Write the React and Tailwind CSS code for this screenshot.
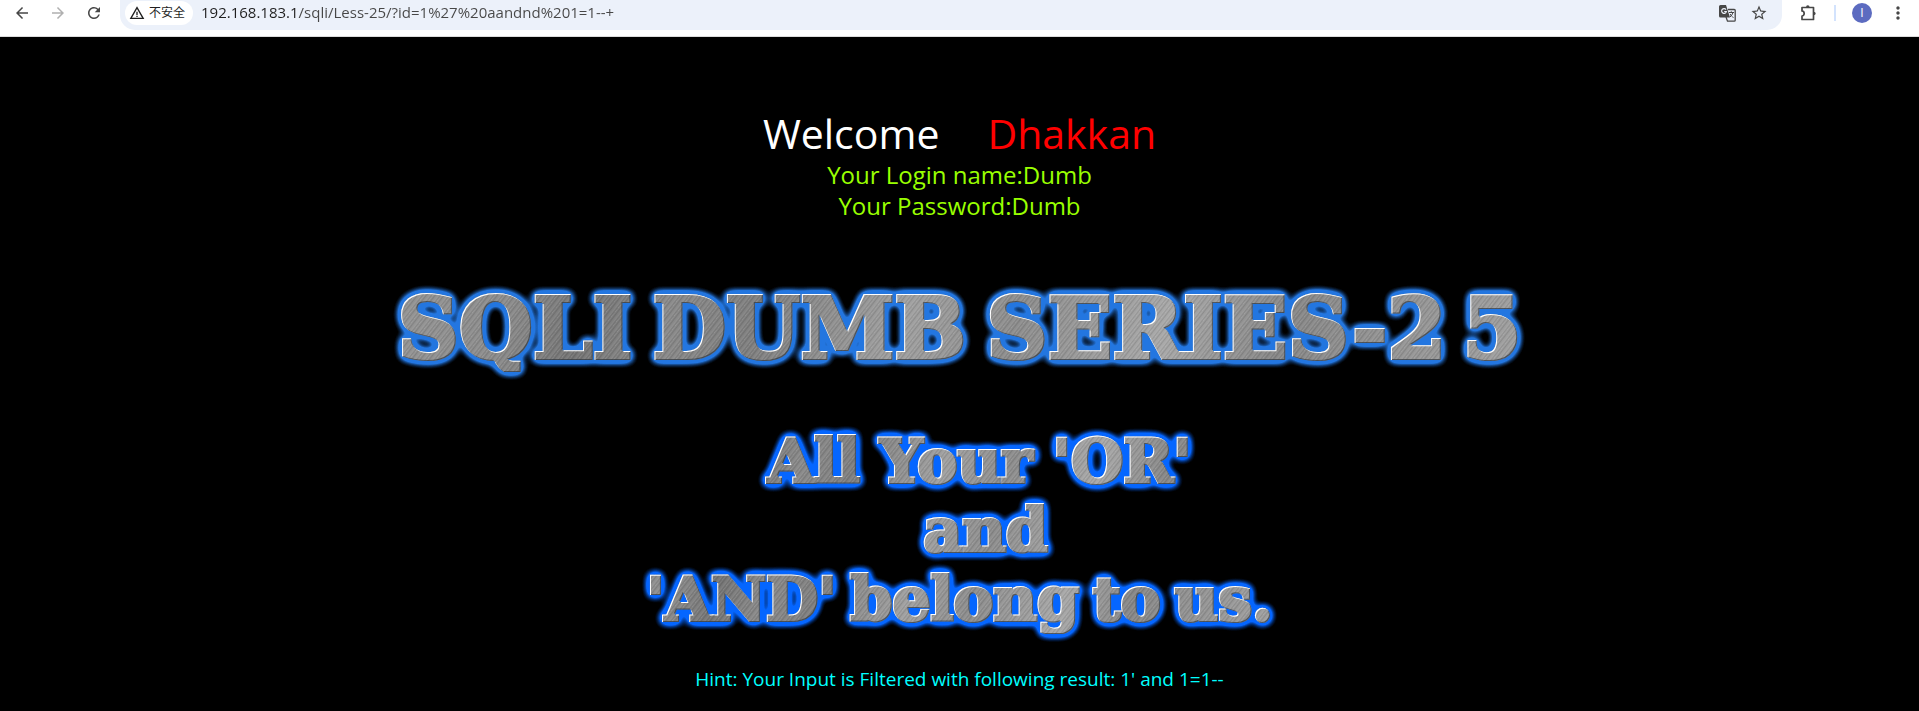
import {
  MdArrowBack, MdArrowForward, MdRefresh, MdWarningAmber,
  MdStarBorder, MdMoreVert,
} from "react-icons/md";

const steel =
  "bg-clip-text text-transparent [-webkit-text-stroke:4px_transparent] bg-[repeating-linear-gradient(128deg,#ffffff1c_0px,#ffffff00_1px,#0000001c_2px,#ffffff00_3px,#ffffff14_5px,#00000012_6px,#ffffff00_7px),linear-gradient(105deg,#949494_0%,#8c8c8c_10%,#757575_17%,#8a8a8a_24%,#7f7f7f_32%,#a0a0a0_45%,#8d8d8d_55%,#a8a8a8_68%,#878787_78%,#949494_88%,#a0a0a0_100%)]";

function GlowFilter({ id, color }) {
  return (
    <filter id={id} x="-5%" y="-30%" width="110%" height="160%" colorInterpolationFilters="sRGB">
      <feGaussianBlur in="SourceAlpha" stdDeviation="5" result="soft" />
      <feComponentTransfer in="soft" result="wide">
        <feFuncA type="linear" slope="5" intercept="-0.15" />
      </feComponentTransfer>
      <feFlood floodColor={color} />
      <feComposite in2="wide" operator="in" result="glow" />
      <feOffset in="SourceAlpha" dx="1" dy="1" result="inset" />
      <feComposite in="SourceAlpha" in2="inset" operator="out" result="edge" />
      <feFlood floodColor="#ffffff" />
      <feComposite in2="edge" operator="in" result="highlight" />
      <feOffset in="SourceAlpha" dx="-1" dy="-1" result="lift" />
      <feComposite in="SourceAlpha" in2="lift" operator="out" result="lower" />
      <feFlood floodColor="#303840" floodOpacity="0.7" />
      <feComposite in2="lower" operator="in" result="shade" />
      <feMerge>
        <feMergeNode in="glow" />
        <feMergeNode in="SourceGraphic" />
        <feMergeNode in="shade" />
        <feMergeNode in="highlight" />
      </feMerge>
    </filter>
  );
}

function TranslateIcon() {
  return (
    <svg width="17" height="17" viewBox="0 0 17 17" fill="none" stroke="currentColor">
      <path d="M9 4.5h6.2a1 1 0 0 1 1 1v9.700a1 1 0 0 1-1 1H8.500L7 12" strokeWidth="1.300" />
      <path d="M1.500 0H7l4 12.500H1.500A1.500 1.500 0 0 1 0 11V1.500A1.500 1.500 0 0 1 1.500 0Z" fill="currentColor" stroke="none" />
      <path d="M7 4.600A2.400 2.400 0 1 0 7.400 6.500H5.200" stroke="#ecf1fa" strokeWidth="1.200" />
      <path d="M10 7.500h5M12.300 6.300v1.200M14 7.500c-.5 2-1.700 3.500-3 4.500M11.200 9c.6 1.500 1.700 2.700 3.300 3.500" strokeWidth="1" />
    </svg>
  );
}

function PuzzleIcon() {
  return (
    <svg width="18" height="18" viewBox="0 0 18 18" fill="none" stroke="currentColor" strokeWidth="1.700">
      <path d="M2 3.500H13.500V15.500H2V12A2 2.300 0 0 0 2 7Z" strokeLinejoin="round" />
      <path d="M6 3.500a1.800 2.200 0 0 1 3.600 0ZM13.500 7.700a2.200 1.800 0 0 1 0 3.600Z" fill="currentColor" stroke="none" />
    </svg>
  );
}

function Toolbar() {
  return (
    <header className="flex h-[37px] items-start border-b border-[#dcdcdc] bg-white pr-[11px] pl-3 font-['Open_Sans','Noto_Sans_CJK_SC',sans-serif] text-[#474747]">
      <nav className="flex h-[26px] w-[108px] shrink-0 items-center gap-[18px] pl-px">
        <button aria-label="Back"><MdArrowBack size={18} /></button>
        <button aria-label="Forward" className="text-[#b0b0b0]"><MdArrowForward size={18} /></button>
        <button aria-label="Reload"><MdRefresh size={18} /></button>
      </nav>
      <div className="flex h-[30px] min-w-0 flex-1 items-start rounded-b-[15px] bg-[#ecf1fa] pr-[14px] pl-[5px]">
        <button className="mt-px flex h-6 shrink-0 items-center gap-1 rounded-full bg-white px-1 pr-2 text-xs text-[#1f1f1f]">
          <MdWarningAmber size={16} />
          不安全
        </button>
        <input
          aria-label="Address"
          defaultValue="192.168.183.1/sqli/Less-25/?id=1%27%20aandnd%201=1--+"
          className="ml-2 h-6 min-w-0 flex-1 bg-[linear-gradient(90deg,#1f1f1f_98px,#474747_98px)] bg-clip-text text-[15px] text-transparent caret-black outline-none"
        />
        <div className="flex h-[26px] items-center gap-[14px]">
          <button aria-label="Translate"><TranslateIcon /></button>
          <button aria-label="Bookmark"><MdStarBorder size={18} /></button>
        </div>
      </div>
      <div className="ml-[18px] flex h-[26px] shrink-0 items-center">
        <button aria-label="Extensions"><PuzzleIcon /></button>
        <span className="ml-4 h-4 w-[2px] bg-[#d3e3fd]" />
        <button className="ml-4 size-5 rounded-full bg-[#5c6bc0] text-xs text-white">I</button>
        <button aria-label="Menu" className="ml-4"><MdMoreVert size={20} /></button>
      </div>
    </header>
  );
}

export default function App() {
  return (
    <div className="min-h-screen bg-black">
      <Toolbar />
      <svg width="0" height="0" className="absolute" aria-hidden="true">
        <defs>
          <GlowFilter id="title-glow" color="#2376e0" />
          <GlowFilter id="caption-glow" color="#0566ff" />
        </defs>
      </svg>
      <main className="flex flex-col items-center pt-[68px] text-center font-['Open_Sans',sans-serif]">
        <p className="flex gap-12 text-[41px] leading-[56px] text-white">
          <span>Welcome</span>
          <span className="text-[#ff0000]">Dhakkan</span>
        </p>
        <p className="-mt-[2px] text-[24px] leading-[31px] font-medium text-[#99ff00]">
          Your Login name:Dumb
          <br />
          Your Password:Dumb
        </p>
        <h1 className="mt-[63px] font-['DejaVu_Serif',serif] text-[85px] leading-[88px] font-bold [filter:url(#title-glow)]">
          <span className={`flex gap-5 ${steel}`}>
            <span>SQLI</span>
            <span>DUMB</span>
            <span>SERIES-2<span className="ml-4">5</span></span>
          </span>
        </h1>
        <h2 className="mt-[55px] font-['DejaVu_Serif',serif] text-[60px] leading-[69px] font-bold [filter:url(#caption-glow)]">
          <span className={`block ${steel}`}>
            <span className="flex justify-center gap-5 pl-10">
              <span>All</span>
              <span>Your</span>
              <span>'OR'</span>
            </span>
            <span className="block pl-[52px]">and</span>
            <span className="flex justify-center gap-[14px]">
              <span>'AND'</span>
              <span>belong</span>
              <span>to</span>
              <span>us.</span>
            </span>
          </span>
        </h2>
        <p className="mt-[33px] text-[19px] leading-6 text-[#00ffff]">
          Hint: Your Input is Filtered with following result: 1' and 1=1--
        </p>
      </main>
    </div>
  );
}
